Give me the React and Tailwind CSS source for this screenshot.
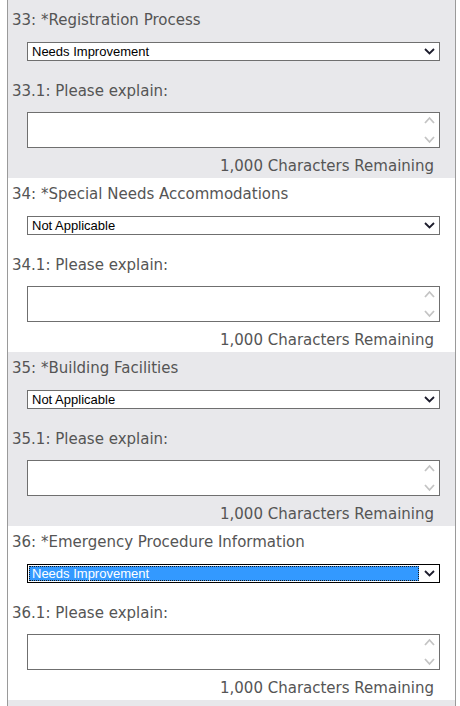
import React from "react";

const rows = [
  { n: "33", title: "*Registration Process", value: "Needs Improvement", gray: true },
  { n: "34", title: "*Special Needs Accommodations", value: "Not Applicable", gray: false },
  { n: "35", title: "*Building Facilities", value: "Not Applicable", gray: true },
  { n: "36", title: "*Emergency Procedure Information", value: "Needs Improvement", gray: false, focus: true },
];

function Chevron() {
  return (
    <svg width="11" height="7" viewBox="0 0 11 7" fill="none">
      <path d="M1 1 L5.5 5.5 L10 1" stroke="currentColor" strokeWidth="1.8" />
    </svg>
  );
}

function Select({ value, focus }) {
  return (
    <div
      className={`ml-[19px] mt-[13px] flex h-[19px] w-[413px] items-stretch border bg-white ${
        focus ? "border-black" : "border-[#6f6f6f]"
      }`}
    >
      <div className="flex flex-1 items-center p-[1px]">
        <span
          className={`flex h-full w-full items-center pl-[3px] text-[13px] leading-none ${
            focus ? "bg-[#3399ff] text-white outline-1 outline-dotted outline-[#1a1a1a] -outline-offset-1" : "text-black"
          }`}
          style={{ fontFamily: '"Liberation Sans", Arial, sans-serif' }}
        >
          {value}
        </span>
      </div>
      <div className="flex w-[19px] items-center justify-center text-[#1c1c2c]">
        <Chevron />
      </div>
    </div>
  );
}

function TextArea() {
  return (
    <div className="ml-[19px] mt-[12px] flex h-[36px] w-[413px] justify-end border border-[#6f6f6f] bg-white">
      <div className="flex w-[17px] flex-col items-center justify-between py-[3px] pr-[2px] text-[#c4c4c4]">
        <svg width="11" height="8" viewBox="0 0 11 8" fill="none">
          <path d="M1 7 L5.5 2 L10 7" stroke="currentColor" strokeWidth="1.8" />
        </svg>
        <svg width="11" height="8" viewBox="0 0 11 8" fill="none">
          <path d="M1 1 L5.5 6 L10 1" stroke="currentColor" strokeWidth="1.8" />
        </svg>
      </div>
    </div>
  );
}

function Row({ n, title, value, gray, focus }) {
  return (
    <div className={`h-[174px] pt-[7px] ${gray ? "bg-[#e8e8eb]" : "bg-white"}`}>
      <div className="pl-[4px] text-[15px] leading-[18px]">
        {n}: {title}
      </div>
      <Select value={value} focus={focus} />
      <div className="mt-[21px] pl-[4px] text-[15px] leading-[18px]">{n}.1: Please explain:</div>
      <TextArea />
      <div className="mt-[9px] pr-[21px] text-right text-[15px] leading-[18px]">1,000 Characters Remaining</div>
    </div>
  );
}

export default function App() {
  return (
    <div className="min-h-[706px] w-[460px] overflow-hidden bg-white">
      <div
        className="ml-[7px] w-[449px] border-l border-r border-[#9a9a9a] text-[#555555]"
        style={{ fontFamily: '"DejaVu Sans", Verdana, sans-serif' }}
      >
        <div className="h-[4px] bg-[#e8e8eb]" />
        {rows.map((r) => (
          <Row key={r.n} {...r} />
        ))}
        <div className="h-[10px] bg-[#e8e8eb]" />
      </div>
    </div>
  );
}
